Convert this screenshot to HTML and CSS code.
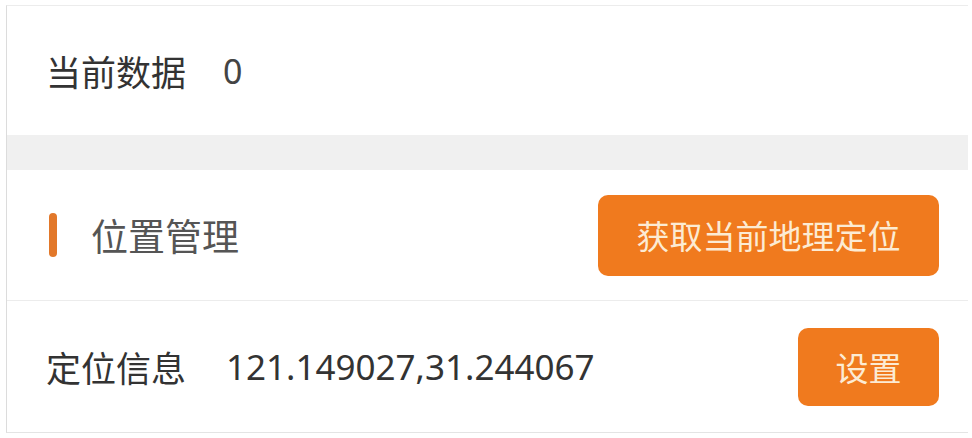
FILE: index.html
```html
<!DOCTYPE html>
<html lang="zh-CN">

<head>
    <meta charset="UTF-8">
    <meta name="viewport" content="width=device-width, initial-scale=1.0">
    <title>位置管理</title>
    <link rel="stylesheet" href="styles.css">
</head>

<body>
    <div class="panel">
        <div class="data-row">
            <span class="label">当前数据</span>
            <span class="value" id="currentData">0</span>
        </div>

        <div class="spacer"></div>

        <div class="section-head">
            <span class="mark"></span>
            <span class="title">位置管理</span>
            <button class="btn btn-wide">获取当前地理定位</button>
        </div>

        <div class="loc-row">
            <span class="label">定位信息</span>
            <span class="value coords">121.149027,31.244067</span>
            <button class="btn btn-small">设置</button>
        </div>
    </div>
</body>

</html>
```

FILE: styles.css
```css
body {
  margin: 0;
  background: #ffffff;
  font-family: "Noto Sans", "Noto Sans CJK SC", sans-serif;
}

.panel {
  margin: 5px 4px 0 6px;
  border-left: 1px solid #dcdcdc;
  border-top: 1px solid #ececec;
  border-bottom: 1px solid #e4e4e4;
}

.label {
  font-size: 35px;
}

.data-row {
  height: 129px;
  display: flex;
  align-items: center;
  padding-left: 39px;
  color: #333333;
}

.data-row .value {
  margin-left: 37px;
  font-size: 34px;
  color: #444444;
}

.spacer {
  height: 35px;
  background-color: #f0f0f0;
}

.section-head {
  height: 130px;
  display: flex;
  align-items: center;
  padding-left: 42px;
  padding-right: 29px;
  border-bottom: 1px solid #ececec;
}

.mark {
  width: 8px;
  height: 44px;
  border-radius: 4px;
  background-color: #e2782a;
}

.title {
  margin-left: 34px;
  font-size: 37px;
  color: #555555;
  flex: 1;
}

.loc-row {
  height: 131px;
  display: flex;
  align-items: center;
  padding-left: 39px;
  padding-right: 29px;
  color: #333333;
}

.coords {
  margin-left: 40px;
  font-size: 35px;
  flex: 1;
}

.btn {
  border: none;
  border-radius: 10px;
  background-color: #f07a1e;
  color: #fcebd3;
  font-family: "Noto Sans", "Noto Sans CJK SC", sans-serif;
  font-size: 33px;
  padding: 0;
}

.btn-wide {
  width: 341px;
  height: 81px;
}

.btn-small {
  width: 141px;
  height: 78px;
}
```
